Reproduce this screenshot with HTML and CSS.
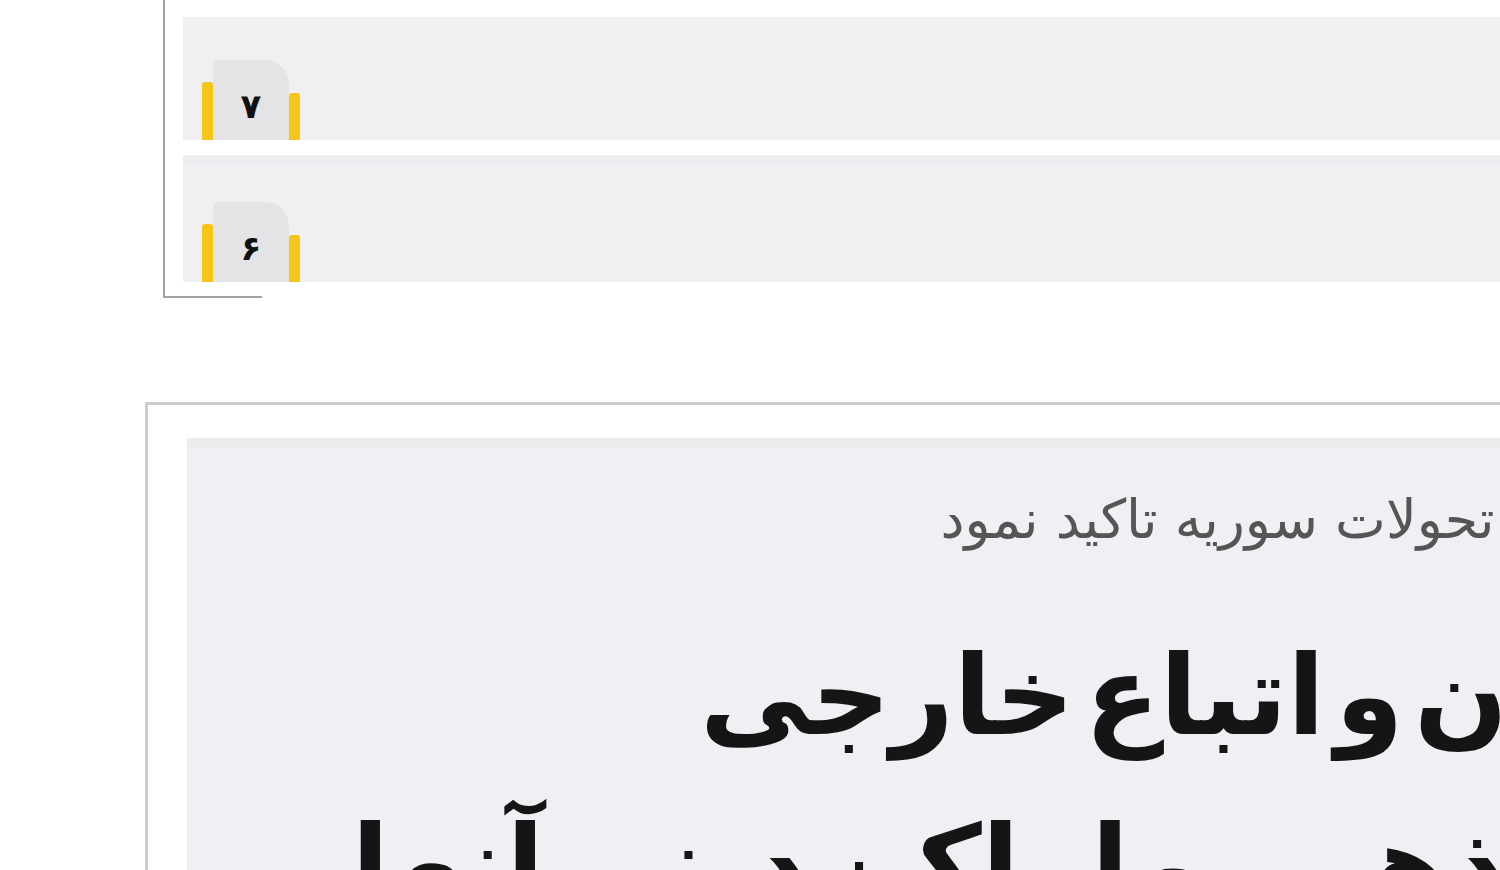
FILE: index.html
```html
<!DOCTYPE html>
<html lang="fa">
<head>
    <meta charset="utf-8">
    <title>اخبار</title>
    <link rel="stylesheet" href="styles.css">
</head>
<body>
    <div class="panel">
        <div class="row">
            <div class="badge">
                <span class="bar bar-left"></span>
                <span class="tab">۷</span>
                <span class="bar bar-right"></span>
            </div>
        </div>
        <div class="row row-second">
            <div class="badge">
                <span class="bar bar-left"></span>
                <span class="tab">۶</span>
                <span class="bar bar-right"></span>
            </div>
        </div>
    </div>
    <div class="panel-base"></div>

    <div class="card">
        <div class="card-inner">
            <p class="lead">سخنگو بر اهمیت تحولات سوریه تاکید نمود</p>
            <h2 class="title">شهروندان و اتباع خارجی<br>و اقوام مذهبی و اماکن دینی آنها</h2>
        </div>
    </div>
</body>
</html>
```

FILE: styles.css
```css
body {
    margin: 0;
    background-color: #fff;
    overflow: hidden;
    font-family: "DejaVu Sans", sans-serif;
}

/* list of numbered rows */
.panel {
    margin-left: 163px;
    width: 1600px;
    border-left: 2px solid #a3a3a3;
    padding: 17px 0 14px 18px;
}
.row {
    height: 123px;
    background-color: #f0f0f2;
    display: flex;
    align-items: flex-end;
    padding-left: 19px;
}
.row-second {
    margin-top: 15px;
    border-top: 10px solid #ededf1;
    height: 117px;
}
.panel-base {
    margin-left: 163px;
    width: 99px;
    border-top: 2px solid #a3a3a3;
}

.badge {
    display: flex;
    align-items: flex-end;
    height: 80px;
}
.bar {
    width: 11px;
    background-color: #f5c518;
    border-radius: 3px 3px 0 0;
}
.bar-left {
    height: 58px;
}
.bar-right {
    height: 47px;
}
.tab {
    width: 76px;
    height: 80px;
    background-color: #e4e4e6;
    border-radius: 6px 24px 0 0;
    font-size: 34px;
    font-weight: bold;
    color: #111;
    display: flex;
    justify-content: center;
    padding-top: 26px;
    box-sizing: border-box;
}

/* news card */
.card {
    margin-top: 104px;
    margin-left: 145px;
    width: 1800px;
    border-top: 3px solid #cdcdcd;
    border-left: 3px solid #cdcdcd;
    padding: 33px 0 0 39px;
}
.card-inner {
    background-color: #f0f0f4;
    border-top: 9px solid #ececec;
    height: 600px;
    direction: rtl;
    text-align: right;
}
.lead {
    margin: 0;
    padding: 41px 98px 0 0;
    font-size: 54px;
    color: #555;
    white-space: nowrap;
}
.title {
    margin: 60px 0 0;
    padding-right: 19px;
    font-size: 110px;
    line-height: 170px;
    font-weight: bold;
    color: #151515;
    word-spacing: -28px;
    white-space: nowrap;
}
```
